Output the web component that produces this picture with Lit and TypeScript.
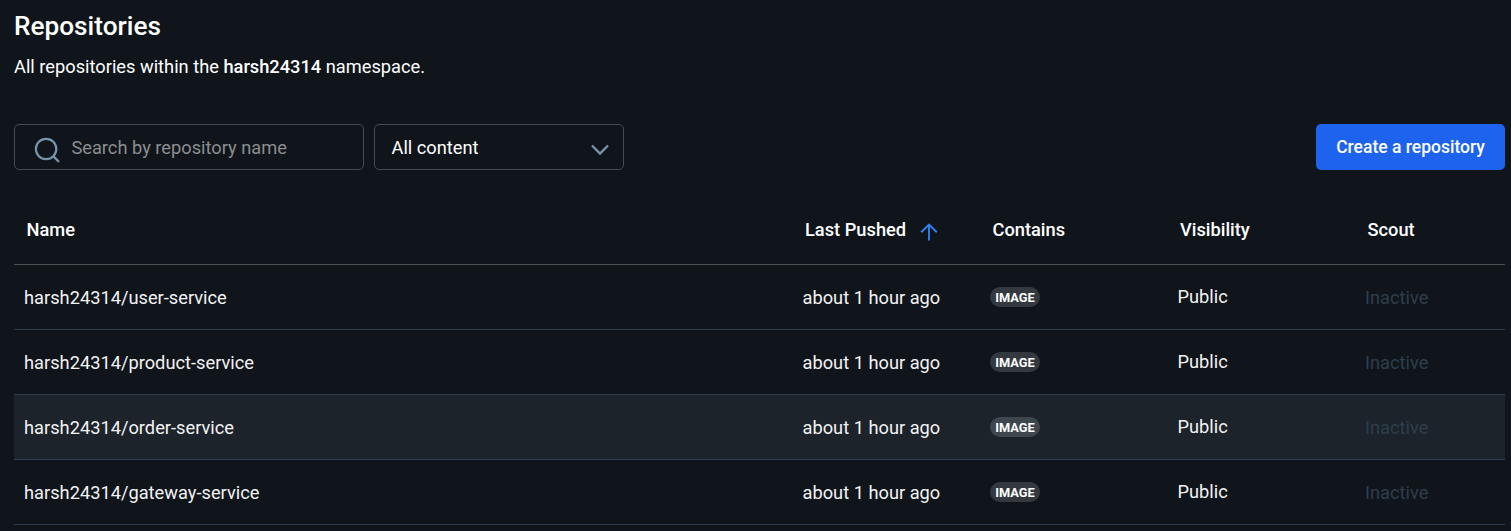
import { LitElement, html, css } from "lit";
import { customElement, property } from "lit/decorators.js";
import { classMap } from "lit/directives/class-map.js";

interface Repo {
  name: string;
  pushed: string;
  visibility: string;
  scout: string;
  hovered?: boolean;
}

const repos: Repo[] = [
  { name: "harsh24314/user-service", pushed: "about 1 hour ago", visibility: "Public", scout: "Inactive" },
  { name: "harsh24314/product-service", pushed: "about 1 hour ago", visibility: "Public", scout: "Inactive" },
  { name: "harsh24314/order-service", pushed: "about 1 hour ago", visibility: "Public", scout: "Inactive", hovered: true },
  { name: "harsh24314/gateway-service", pushed: "about 1 hour ago", visibility: "Public", scout: "Inactive" },
];

@customElement("repo-toolbar")
export class RepoToolbar extends LitElement {
  static styles = css`
    :host {
      display: flex;
      gap: 10px;
      height: 46px;
      font-size: 18.25px;
      line-height: 26px;
    }
    .field {
      box-sizing: border-box;
      display: flex;
      align-items: center;
      padding-top: 1px;
      border: 1px solid #414a52;
      border-radius: 5px;
    }
    .search {
      width: 350px;
      padding-left: 19px;
      gap: 10.4px;
      color: #8b8d90;
    }
    .select {
      width: 250px;
      padding-left: 16.5px;
      padding-right: 13px;
      justify-content: space-between;
      color: #fff;
    }
    .icon {
      display: block;
      flex: none;
      margin-top: 4px;
    }
    .search .icon {
      margin-top: 5px;
    }
    .create {
      box-sizing: border-box;
      width: 189px;
      margin-left: auto;
      padding: 0 0 1px;
      border: 0;
      border-radius: 5px;
      background: #1d63ed;
      color: #fff;
      font: 500 17.5px/26px Roboto, sans-serif;
    }
  `;

  render() {
    return html`
      <div class="field search">
        <svg class="icon" width="27" height="27" viewBox="0 0 27 27" fill="none" stroke="#7794ab" stroke-width="2.2">
          <circle cx="12.1" cy="12" r="10.2" />
          <path d="M19.2 19.1 25 24.9" />
        </svg>
        <span>Search by repository name</span>
      </div>
      <div class="field select">
        <span>All content</span>
        <svg class="icon" width="20" height="14" viewBox="0 0 20 14" fill="none" stroke="#7794ab" stroke-width="2.3">
          <path d="m2 2.5 8 8 8-8" />
        </svg>
      </div>
      <button class="create">Create a repository</button>
    `;
  }
}

@customElement("repo-table")
export class RepoTable extends LitElement {
  @property({ attribute: false }) rows: Repo[] = [];

  static styles = css`
    :host {
      display: block;
      font-size: 18.25px;
      line-height: 26px;
    }
    .row {
      box-sizing: border-box;
      display: grid;
      grid-template-columns: 1fr repeat(3, 187.5px) 140px;
      align-items: center;
      height: 65px;
      padding-left: 10px;
      border-bottom: 1px solid #2d3e4a;
      color: #f2f2f3;
    }
    .head {
      grid-template-columns: 1fr repeat(3, 187.5px) 137.5px;
      height: 71px;
      padding: 1px 0 0 12.5px;
      border-bottom-color: #4b5052;
      color: #fff;
      font-weight: 500;
    }
    .hovered {
      background: #1c232a;
      border-bottom-color: #2c4050;
    }
    .sorted {
      display: flex;
      align-items: center;
      gap: 13.5px;
    }
    .arrow {
      display: block;
      margin-top: 5px;
    }
    .name,
    .pushed,
    .inactive {
      padding-top: 2px;
    }
    .badge {
      display: block;
      box-sizing: border-box;
      width: 50px;
      height: 20px;
      border-radius: 10px;
      background: #33393e;
      color: #fff;
      font-size: 12.8px;
      font-weight: 700;
      line-height: 21px;
      text-align: center;
    }
    .hovered .badge {
      background: #3e464e;
    }
    .inactive {
      color: #2e3e4c;
    }
  `;

  render() {
    return html`
      <div class="row head">
        <span>Name</span>
        <span class="sorted">
          Last Pushed
          <svg class="arrow" width="18" height="18" viewBox="0 0 18 18" fill="none" stroke="#2f81f7" stroke-width="1.9">
            <path d="M9 17.5V2M1.2 9.2 9 1.6l7.8 7.6" />
          </svg>
        </span>
        <span>Contains</span>
        <span>Visibility</span>
        <span>Scout</span>
      </div>
      ${this.rows.map(
        (r) => html`
          <div class=${classMap({ row: true, hovered: !!r.hovered })}>
            <span class="name">${r.name}</span>
            <span class="pushed">${r.pushed}</span>
            <span class="badge">IMAGE</span>
            <span class="public">${r.visibility}</span>
            <span class="inactive">${r.scout}</span>
          </div>
        `
      )}
    `;
  }
}

@customElement("app-root")
export class AppRoot extends LitElement {
  static styles = css`
    :host {
      display: block;
      box-sizing: border-box;
      height: 531px;
      overflow: hidden;
      padding: 10px 6px 0 14px;
      background: #10151b;
      color: #fff;
      font-family: Roboto, sans-serif;
    }
    .title {
      margin: 0;
      font-size: 26.2px;
      font-weight: 500;
      line-height: 32px;
    }
    .subtitle {
      margin: 12px 0 44px;
      font-size: 18.25px;
      line-height: 26px;
    }
    .namespace {
      font-weight: 500;
    }
    .table {
      margin-top: 24px;
    }
  `;

  render() {
    return html`
      <h1 class="title">Repositories</h1>
      <p class="subtitle">All repositories within the <b class="namespace">harsh24314</b> namespace.</p>
      <repo-toolbar></repo-toolbar>
      <repo-table class="table" .rows=${repos}></repo-table>
    `;
  }
}
